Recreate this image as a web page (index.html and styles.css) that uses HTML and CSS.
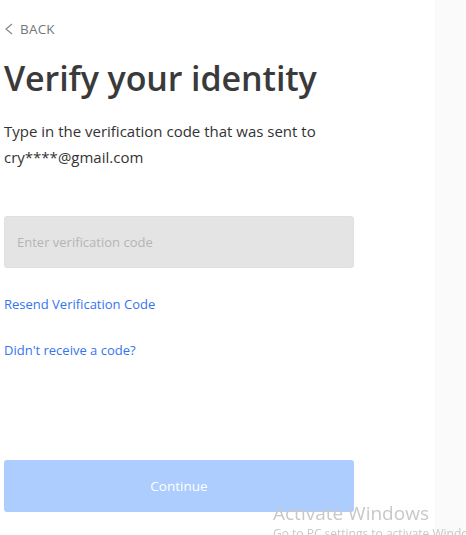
FILE: index.html
```html
<!DOCTYPE html>
<html lang="en">
  <head>
    <meta charset="UTF-8" />
    <meta name="viewport" content="width=device-width, initial-scale=1.0" />
    <title>Verify your identity</title>

    <link rel="stylesheet" href="styles.css">
  </head>
  <body>
    <div class="page">
      <div class="panel">
        <a class="back" href="#">
          <svg width="10" height="12" viewBox="0 0 10 12"><path d="M8 1 L2 6 L8 11" fill="none" stroke="#888" stroke-width="1.2"/></svg>
          BACK
        </a>

        <h1 class="title">Verify your identity</h1>

        <p class="intro">Type in the verification code that was sent to<br />cry****@gmail.com</p>

        <form>
          <input type="text" class="code-input" placeholder="Enter verification code" />

          <a class="link resend" href="#">Resend Verification Code</a>
          <a class="link help" href="#">Didn't receive a code?</a>

          <button type="button" class="continue" disabled>Continue</button>
        </form>
      </div>
      <div class="side"></div>
    </div>

    <div class="watermark">
      <div class="wm-title">Activate Windows</div>
      <div class="wm-sub">Go to PC settings to activate Windows.</div>
    </div>
  </body>
</html>
```

FILE: styles.css
```css
body {
  font-family: "Open Sans", "Noto Sans", Arial, sans-serif;
  margin: 0;
  color: #333;
  background: #fff;
  overflow: hidden;
}
.page {
  display: flex;
  height: 100vh;
}
.panel {
  width: 431px;
  padding-left: 4px;
}
.side {
  flex: 1;
  background-color: #fafafa;
}
.back {
  display: flex;
  align-items: center;
  gap: 6px;
  margin-top: 20px;
  height: 18px;
  font-size: 13.5px;
  color: #777;
  text-decoration: none;
  letter-spacing: 0.2px;
}
.title {
  margin: 18px 0 0;
  font-size: 34px;
  font-weight: 600;
  line-height: 44px;
  color: #3a3a3a;
  letter-spacing: -0.1px;
}
.intro {
  margin: 18px 0 0;
  font-size: 15px;
  line-height: 26px;
  color: #333;
}
form {
  display: flex;
  flex-direction: column;
  align-items: flex-start;
}
.code-input {
  box-sizing: border-box;
  width: 350px;
  height: 52px;
  margin-top: 46px;
  padding: 0 12px;
  border: 1px solid #e0e0e0;
  border-radius: 3px;
  background-color: #e4e4e4;
  font-family: inherit;
  font-size: 13px;
  color: #333;
}
.code-input::placeholder {
  color: #b5b5b5;
}
.link {
  font-size: 13px;
  color: #3574f0;
  text-decoration: none;
  line-height: 18px;
}
.resend {
  margin-top: 27px;
}
.help {
  margin-top: 28px;
}
.continue {
  width: 350px;
  height: 52px;
  margin-top: 101px;
  border: none;
  border-radius: 3px;
  background-color: #adcdfe;
  color: #fff;
  font-family: inherit;
  font-size: 13.5px;
}
.watermark {
  position: fixed;
  left: 273px;
  top: 500px;
  color: #c8c8c8;
  white-space: nowrap;
}
.wm-title {
  font-size: 19px;
  line-height: 26px;
}
.wm-sub {
  font-size: 12px;
  line-height: 16px;
}
```
